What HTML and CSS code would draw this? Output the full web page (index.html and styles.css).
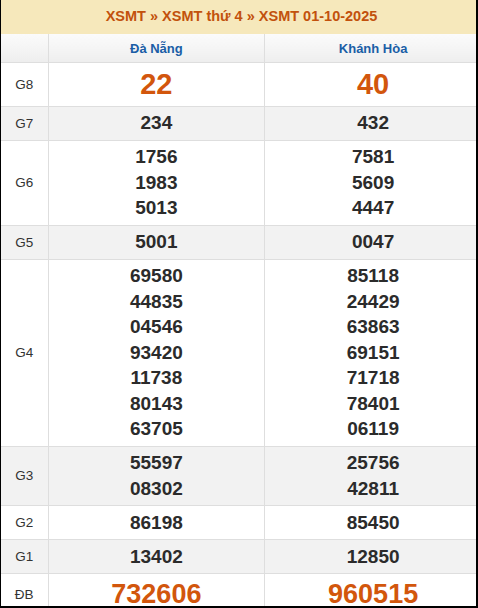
FILE: index.html
```html
<!DOCTYPE html>
<html lang="vi">
<head>
<meta charset="utf-8">
<link rel="stylesheet" href="styles.css">
</head>
<body>
<div class="frame">
  <div class="title">
    <a class="crumb">XSMT</a> » <a class="crumb">XSMT thứ 4</a> » <a class="crumb">XSMT 01-10-2025</a>
  </div>
  <table class="kq">
    <colgroup><col class="c-label"><col class="c-prov"><col class="c-prov"></colgroup>
    <thead>
      <tr class="head"><th></th><th>Đà Nẵng</th><th>Khánh Hòa</th></tr>
    </thead>
    <tbody>
      <tr><td class="lbl">G8</td><td class="big">22</td><td class="big">40</td></tr>
      <tr class="alt"><td class="lbl">G7</td><td class="num">234</td><td class="num">432</td></tr>
      <tr><td class="lbl">G6</td><td class="num">1756<br>1983<br>5013</td><td class="num">7581<br>5609<br>4447</td></tr>
      <tr class="alt"><td class="lbl">G5</td><td class="num">5001</td><td class="num">0047</td></tr>
      <tr><td class="lbl">G4</td><td class="num">69580<br>44835<br>04546<br>93420<br>11738<br>80143<br>63705</td><td class="num">85118<br>24429<br>63863<br>69151<br>71718<br>78401<br>06119</td></tr>
      <tr class="alt"><td class="lbl">G3</td><td class="num">55597<br>08302</td><td class="num">25756<br>42811</td></tr>
      <tr><td class="lbl">G2</td><td class="num">86198</td><td class="num">85450</td></tr>
      <tr class="alt"><td class="lbl">G1</td><td class="num">13402</td><td class="num">12850</td></tr>
      <tr><td class="lbl">ĐB</td><td class="big db">732606</td><td class="big db">960515</td></tr>
    </tbody>
  </table>
</div>
</body>
</html>
```
FILE: styles.css
```css
html, body {
  margin: 0;
  padding: 0;
  background: #fff;
}
.frame {
  width: 475px;
  height: 606px;
  overflow: hidden;
  border-left: 1px solid #000;
  border-right: 2px solid #000;
  border-bottom: 2px solid #000;
  font-family: "Liberation Sans", Arial, sans-serif;
  color: #333;
}
.title {
  width: 481px;
  height: 34px;
  line-height: 32px;
  background: #f6e8bb;
  text-align: center;
  font-size: 14.5px;
  font-weight: bold;
  color: #c2510c;
}
.crumb {
  color: #c2510c;
  text-decoration: none;
}
.kq {
  width: 481px;
  border-collapse: collapse;
  table-layout: fixed;
}
.c-label { width: 47px; }
.kq th, .kq td {
  border: 1px solid #dedede;
  text-align: center;
  padding: 3.75px 0;
}
.kq tr > :first-child { border-left: none; }
.kq thead th { border-top: none; }
.head th {
  height: 20px;
  padding: 4px 0;
  background: linear-gradient(#fbfbfb, #eeeeee);
  color: #1a5ea6;
  font-size: 13px;
  font-weight: bold;
}
.alt td { background: #f2f2f2; }
.lbl {
  font-size: 13.5px;
  color: #333;
}
.num {
  font-size: 19px;
  font-weight: bold;
  line-height: 25.5px;
  color: #2b2b2b;
}
.big {
  font-size: 29px;
  font-weight: bold;
  line-height: 35px;
  color: #d2560c;
}
.big.db {
  font-size: 27px;
  line-height: 33px;
}
```
